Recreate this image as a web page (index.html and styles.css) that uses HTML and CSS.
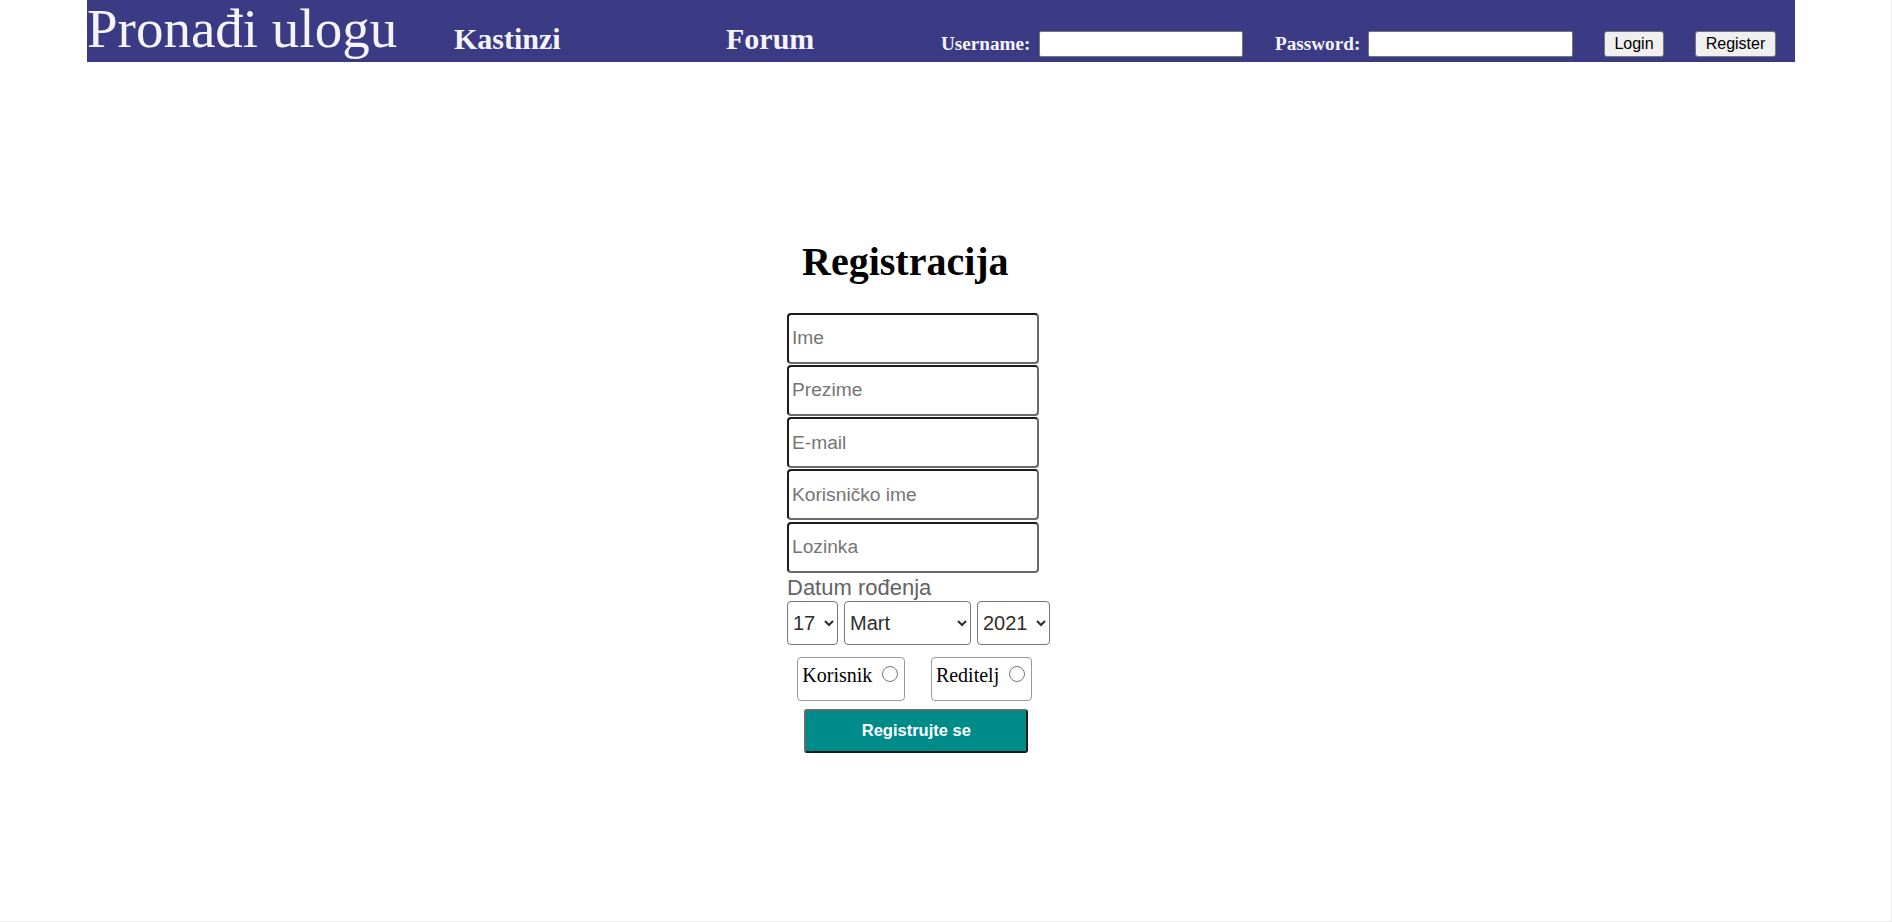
FILE: index.html
```html
<!DOCTYPE html>
<html lang="sr">
<head>
<meta charset="utf-8">
<title>Pronađi ulogu - Registracija</title>
<link rel="stylesheet" href="styles.css">
</head>
<body>
<div class="page">
  <header class="topbar">
    <div class="logo">Pronađi ulogu</div>
    <a class="nav nav-kastinzi" href="#">Kastinzi</a>
    <a class="nav nav-forum" href="#">Forum</a>
    <form class="login">
      <label class="lbl lbl-user">Username:</label>
      <input class="field field-user" type="text">
      <label class="lbl lbl-pass">Password:</label>
      <input class="field field-pass" type="password">
      <button type="button" class="btn btn-login">Login</button>
      <button type="button" class="btn btn-register">Register</button>
    </form>
  </header>

  <main class="register">
    <h1 class="title">Registracija</h1>
    <input class="reg-input" type="text" placeholder="Ime">
    <input class="reg-input" type="text" placeholder="Prezime">
    <input class="reg-input" type="text" placeholder="E-mail">
    <input class="reg-input" type="text" placeholder="Korisničko ime">
    <input class="reg-input" type="password" placeholder="Lozinka">
    <div class="dob-label">Datum rođenja</div>
    <div class="dob">
      <select class="sel sel-day"><option>17</option></select>
      <select class="sel sel-month"><option>Mart</option></select>
      <select class="sel sel-year"><option>2021</option></select>
    </div>
    <div class="roles">
      <label class="role">Korisnik <input class="radio" type="radio" name="role"></label>
      <label class="role">Reditelj <input class="radio" type="radio" name="role"></label>
    </div>
    <button type="button" class="submit">Registrujte se</button>
  </main>
</div>
</body>
</html>
```

FILE: styles.css
```css
html, body {
  margin: 0;
  padding: 0;
  background: #ffffff;
}

.page {
  box-sizing: border-box;
  min-height: 922px;
  border-right: 1px solid #ececec;
  border-bottom: 1px solid #ececec;
  font-family: "Liberation Serif", "Times New Roman", serif;
}

/* ---------- header ---------- */
.topbar {
  margin-left: 87px;
  width: 1708px;
  height: 62px;
  background: #3b3a84;
  display: flex;
  align-items: flex-start;
  color: #f4f4fa;
}

.logo {
  box-sizing: border-box;
  flex: 0 0 367px;
  padding-left: 0;
  margin-top: 1px;
  font-size: 55px;
  line-height: 55px;
  white-space: nowrap;
}

.nav {
  color: #f4f4fa;
  text-decoration: none;
  font-weight: bold;
  font-size: 30px;
  line-height: 30px;
  margin-top: 24px;
  white-space: nowrap;
}

.nav-kastinzi { flex: 0 0 272px; }
.nav-forum { flex: 0 0 215px; }

.login {
  display: flex;
  align-items: flex-start;
  margin: 0;
}

.lbl {
  font-weight: bold;
  font-size: 19.2px;
  line-height: 19.2px;
  margin-top: 34px;
  white-space: nowrap;
}

.lbl-user { flex: 0 0 98px; }
.lbl-pass { flex: 0 0 93px; margin-left: 32px; }

.field {
  box-sizing: border-box;
  margin: 31px 0 0 0;
  height: 26px;
  padding: 1px 3px;
  border: 1px solid #767676;
  border-radius: 2px;
  background: #ffffff;
  font-family: "Liberation Sans", Arial, sans-serif;
  font-size: 16px;
}

.field-user { width: 204px; }
.field-pass { width: 205px; }

.btn {
  box-sizing: border-box;
  margin: 31px 0 0 31px;
  height: 26px;
  padding: 0;
  border: 1px solid #767676;
  border-radius: 3px;
  background: #efefef;
  color: #000;
  font-family: "Liberation Sans", Arial, sans-serif;
  font-size: 16px;
  line-height: 22px;
}

.btn-login { width: 60px; }
.btn-register { width: 81px; }

/* ---------- registration form ---------- */
.register {
  margin-left: 787px;
  width: 264px;
  padding-top: 179.5px;
}

.title {
  margin: 0 0 31px 15px;
  font-size: 40px;
  line-height: 40px;
  font-weight: bold;
  color: #000;
  white-space: nowrap;
}

.reg-input {
  display: block;
  box-sizing: border-box;
  width: 252px;
  height: 51px;
  margin: 0 0 1.3px 0;
  padding: 0 3px;
  border-style: solid;
  border-width: 2px;
  border-color: #1c1c1c #6a6a6a #6a6a6a #1c1c1c;
  border-radius: 4px;
  background: #fff;
  font-family: "Liberation Sans", Arial, sans-serif;
  font-size: 19.2px;
  color: #000;
}

.reg-input::placeholder {
  color: #757575;
}

.dob-label {
  margin-top: 3.5px;
  font-family: "Liberation Sans", Arial, sans-serif;
  font-size: 22px;
  line-height: 24px;
  color: #636363;
  white-space: nowrap;
}

.dob {
  display: flex;
  gap: 6px;
  margin-top: 1.3px;
}

.sel {
  box-sizing: border-box;
  height: 44px;
  padding: 0 0 0 1px;
  border: 1px solid #767676;
  border-radius: 4px;
  background: #fff;
  color: #2e2e2e;
  font-family: "Liberation Sans", Arial, sans-serif;
  font-size: 20px;
}

.sel-day { width: 51px; }
.sel-month { width: 127px; }
.sel-year { width: 73px; }

.roles {
  display: flex;
  gap: 26px;
  margin: 11.5px 0 0 10.3px;
}

.role {
  box-sizing: border-box;
  height: 44px;
  padding: 5px 3px 0 4px;
  border: 1px solid #9a9a9a;
  border-radius: 4px;
  font-size: 20px;
  line-height: 23px;
  color: #000;
  white-space: nowrap;
}

.radio {
  width: 15.6px;
  height: 15.6px;
  margin: 3px 3px 0 5px;
}

.submit {
  display: block;
  box-sizing: border-box;
  width: 224px;
  height: 44px;
  margin: 8px 0 0 17.3px;
  padding: 0;
  border-style: solid;
  border-width: 2px;
  border-color: #5f6f6f #0f1f1f #0f1f1f #5f6f6f;
  border-radius: 3px;
  background: #008b8b;
  color: #ffffff;
  font-family: "Liberation Sans", Arial, sans-serif;
  font-weight: bold;
  font-size: 16.5px;
}
```
